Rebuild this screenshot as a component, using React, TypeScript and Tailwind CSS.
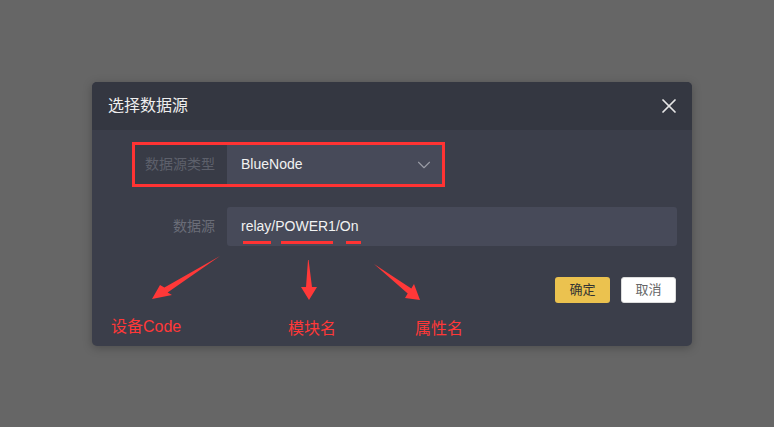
import { ChevronDown, X } from "lucide-react";

function Arrows() {
  return (
    <svg
      className="absolute left-0 top-0 pointer-events-none"
      width={600}
      height={264}
      viewBox="0 0 600 264"
    >
      <g fill="#ff3838">
        <polygon points="128,174 75.6,210.5 80,213 60,217 68,203 72.4,205.5" />
        <polygon points="216.6,178 220,205 225,205 217,218 209,205 214,205 216,178" />
        <polygon points="282,182 315.7,211.4 313,216 328,218 322,202 319.3,206.6" />
      </g>
    </svg>
  );
}

export default function App() {
  return (
    <div className="w-[774px] h-[427px] bg-[#666666] flex justify-center pt-[82px] pl-[10px] font-['Liberation_Sans','Noto_Sans_CJK_SC',sans-serif]">
      <div className="relative w-[600px] h-[264px] rounded-[5px] bg-[#3b3e4a] overflow-hidden shadow-[0_2px_10px_rgba(0,0,0,0.25)]">
        {/* header */}
        <div className="h-[48px] bg-[#343741] flex items-center justify-between pl-[16px] pr-[11px]">
          <span className="text-[16px] text-[#eeeeee]">选择数据源</span>
          <X size={24} strokeWidth={1.7} className="text-[#e6e6e6]" />
        </div>

        {/* type row */}
        <div className="mt-[12px] ml-[40px] w-[313px] h-[45px] border-[3px] border-[#ff3333] flex">
          <div className="w-[92px] bg-[#383b46] flex items-center justify-end pr-[12px] text-[14px] text-[#5d606b]">
            数据源类型
          </div>
          <div className="flex-1 bg-[#474a59] flex items-center justify-between pl-[14px] pr-[7px]">
            <span className="text-[14px] text-[#f2f2f2]">BlueNode</span>
            <ChevronDown size={22} strokeWidth={1.2} className="text-[#9a9ca6]" />
          </div>
        </div>

        {/* source row */}
        <div className="mt-[20px] ml-[43px] flex">
          <div className="w-[92px] flex items-center justify-end pr-[12px] text-[14px] text-[#6a6d78]">
            数据源
          </div>
          <div className="relative w-[450px] h-[39px] rounded-[3px] bg-[#474a59] flex items-center pl-[14px]">
            <span className="text-[14px] text-[#f2f2f2]">relay/POWER1/On</span>
            <span className="absolute left-[16px] top-[34px] w-[28px] h-[3px] bg-[#ff3333]" />
            <span className="absolute left-[54px] top-[34px] w-[52px] h-[3px] bg-[#ff3333]" />
            <span className="absolute left-[119px] top-[34px] w-[15px] h-[3px] bg-[#ff3333]" />
          </div>
        </div>

        {/* footer buttons */}
        <div className="mt-[31px] pr-[16px] flex justify-end gap-[11px]">
          <button className="w-[55px] h-[26px] rounded-[3px] bg-[#ebc24f] text-[13px] text-[#333333]">
            确定
          </button>
          <button className="w-[55px] h-[26px] rounded-[3px] bg-white border border-[#dcdcdc] text-[13px] text-[#666666]">
            取消
          </button>
        </div>

        <Arrows />
        <span className="absolute left-[19px] top-[235px] text-[16px] leading-[20px] text-[#ff3838]">设备Code</span>
        <span className="absolute left-[196px] top-[237px] text-[16px] leading-[20px] text-[#ff3838]">模块名</span>
        <span className="absolute left-[323px] top-[237px] text-[16px] leading-[20px] text-[#ff3838]">属性名</span>
      </div>
    </div>
  );
}
